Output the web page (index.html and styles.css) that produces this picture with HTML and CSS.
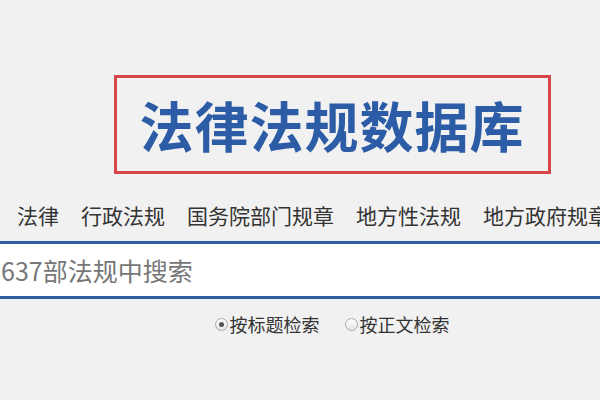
FILE: index.html
```html
<!DOCTYPE html>
<html>
<head>
	<meta charset="utf-8">
	<title>法律法规数据库</title>
	<link rel="stylesheet" href="styles.css">
</head>
<body>
	<div class="wrap">
		<div class="logo">法律法规数据库</div>

		<ul class="nav">
			<li><a href="#">法律</a></li>
			<li><a href="#">行政法规</a></li>
			<li><a href="#">国务院部门规章</a></li>
			<li><a href="#">地方性法规</a></li>
			<li><a href="#">地方政府规章</a></li>
		</ul>

		<div class="search">
			<input type="text" placeholder="637部法规中搜索">
		</div>

		<div class="mode">
			<label><span class="radio on"></span>按标题检索</label>
			<label><span class="radio"></span>按正文检索</label>
		</div>
	</div>
</body>
</html>
```

FILE: styles.css
```css
html, body { margin: 0; padding: 0; background: #f1f1f1; overflow: hidden; }
body { font-family: "Noto Sans CJK SC", "Microsoft YaHei", sans-serif; color: #333; }
.wrap { width: 720px; margin-left: -28px; padding-top: 75px; }

.logo { width: 431px; height: 93px; margin: 0 auto; border: 3px solid #d9444b; text-align: center; line-height: 93px; font-size: 54px; font-weight: bold; color: #2c5ca6; letter-spacing: 1px; }

.nav { list-style: none; margin: 26px 0 0; padding: 0 0 0 45px; display: flex; gap: 22px; white-space: nowrap; }
.nav a { font-size: 21px; line-height: 30px; color: #333; text-decoration: none; }

.search { margin-top: 11px; border-top: 3px solid #2f5d9e; border-bottom: 3px solid #2f5d9e; background: #fff; }
.search input { display: block; width: 100%; box-sizing: border-box; height: 52px; border: 0; outline: 0; padding: 0 0 0 29px; font-family: inherit; font-size: 25px; color: #333; background: #fff; }
.search input::placeholder { color: #777; }

.mode { margin-top: 12px; display: flex; justify-content: center; gap: 25px; font-size: 18px; line-height: 26px; color: #333; }
.mode label { display: flex; align-items: center; gap: 2px; }
.radio { width: 11px; height: 11px; border: 1px solid #a8a8a8; border-radius: 50%; background: linear-gradient(#fff, #e4e4e4); position: relative; }
.radio.on:after { content: ""; position: absolute; left: 3px; top: 3px; width: 5px; height: 5px; border-radius: 50%; background: #555; }
```
